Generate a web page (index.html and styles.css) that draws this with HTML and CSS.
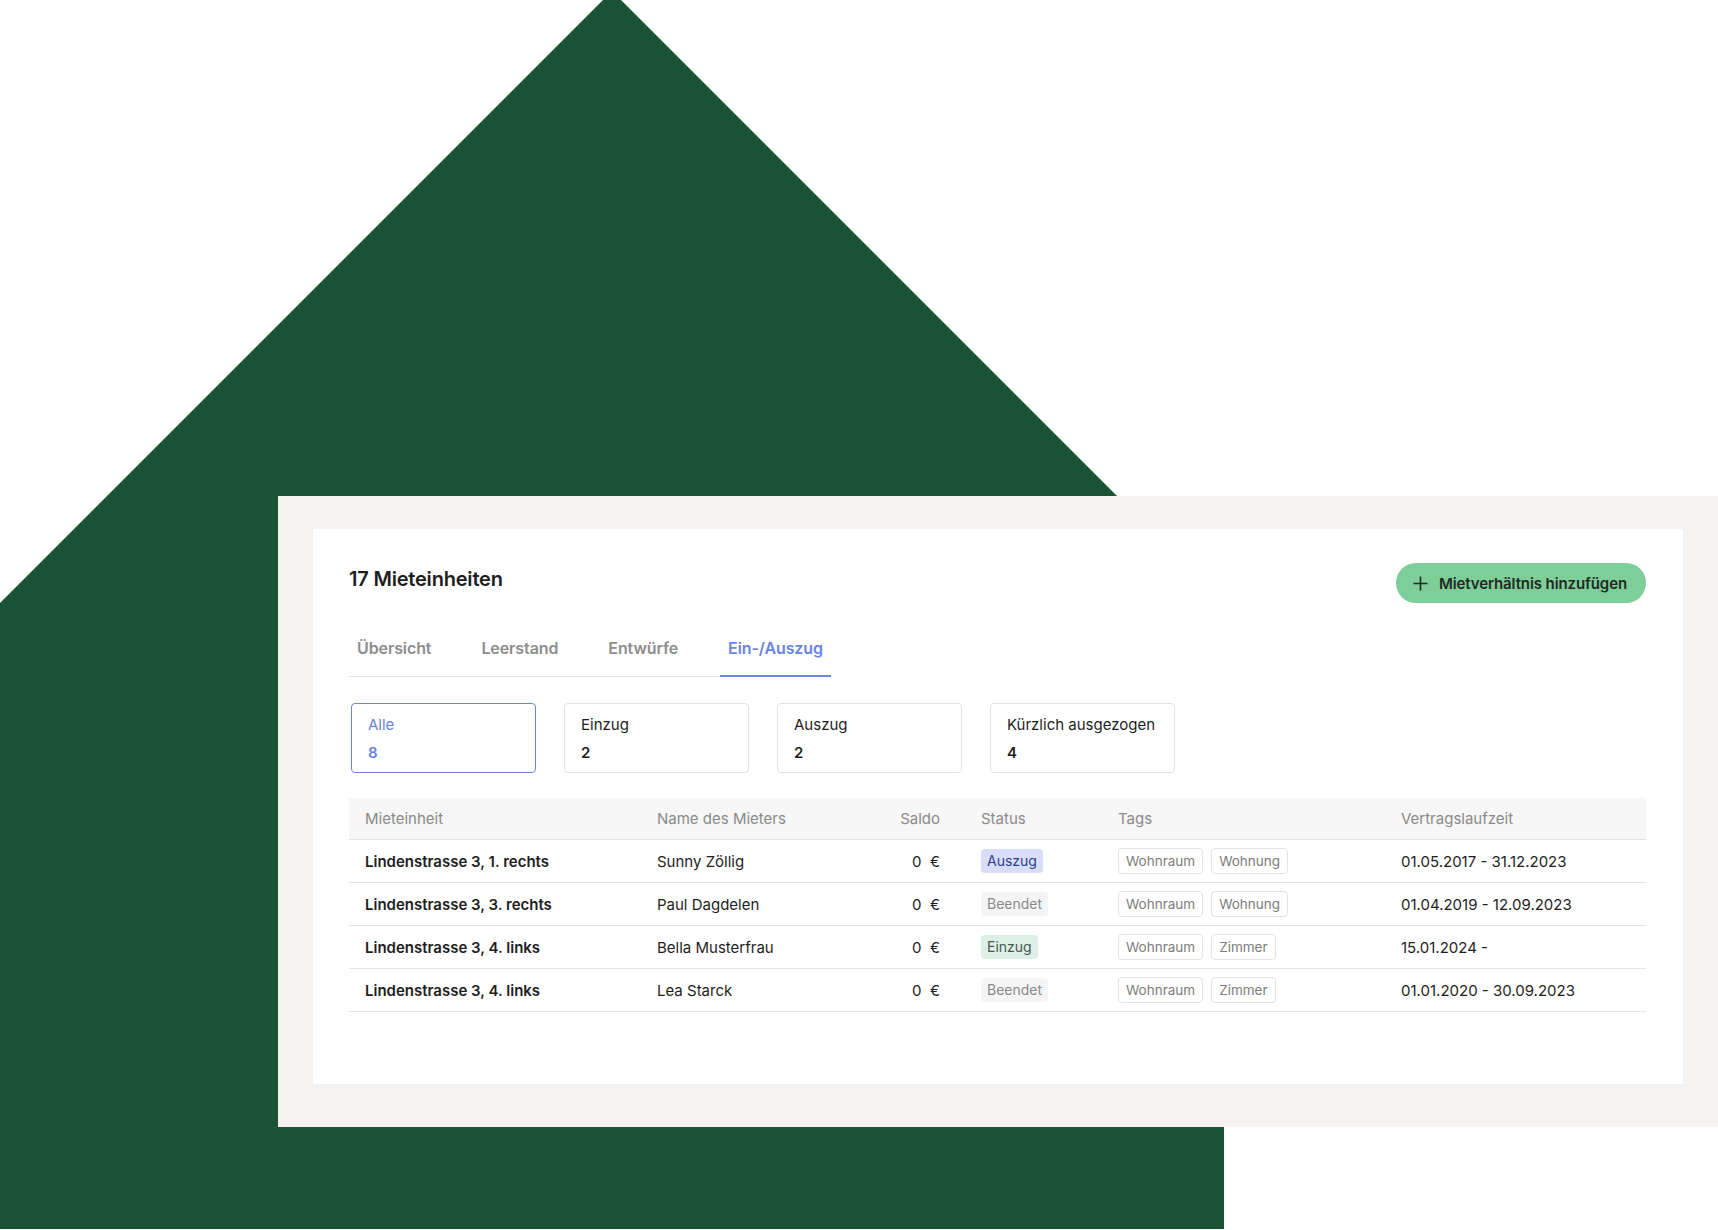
FILE: index.html
```html
<!DOCTYPE html>
<html lang="de">
<head>
  <meta charset="UTF-8" />
  <meta name="viewport" content="width=device-width, initial-scale=1.0" />
  <title>Mieteinheiten</title>
  <link rel="stylesheet" href="styles.css">
</head>
<body>
  <div class="stage">
    <svg class="house" width="1224" height="1230" viewBox="0 0 1224 1230" aria-hidden="true">
      <polygon points="612,-9 1224,603 1224,1229 0,1229 0,603" fill="#1a5434" />
    </svg>

    <div class="panel">
      <div class="card">
        <div class="card-head">
          <h1>17 Mieteinheiten</h1>
          <button type="button" class="add-btn">
            <svg width="15" height="15" viewBox="0 0 15 15"><path d="M7.5 0.5v14M0.5 7.5h14" stroke="#1f2a22" stroke-width="1.6" fill="none"/></svg>
            <span>Mietverhältnis hinzufügen</span>
          </button>
        </div>

        <nav class="tabs">
          <a class="tab">Übersicht</a>
          <a class="tab">Leerstand</a>
          <a class="tab">Entwürfe</a>
          <a class="tab active">Ein-/Auszug</a>
        </nav>

        <div class="filters">
          <div class="filter active">
            <span class="filter-label">Alle</span>
            <span class="filter-count">8</span>
          </div>
          <div class="filter">
            <span class="filter-label">Einzug</span>
            <span class="filter-count">2</span>
          </div>
          <div class="filter">
            <span class="filter-label">Auszug</span>
            <span class="filter-count">2</span>
          </div>
          <div class="filter">
            <span class="filter-label">Kürzlich ausgezogen</span>
            <span class="filter-count">4</span>
          </div>
        </div>

        <table class="units">
          <colgroup>
            <col class="c-unit"><col class="c-name"><col class="c-saldo"><col class="c-status"><col class="c-tags"><col>
          </colgroup>
          <thead>
            <tr>
              <th>Mieteinheit</th>
              <th>Name des Mieters</th>
              <th class="num">Saldo</th>
              <th>Status</th>
              <th>Tags</th>
              <th>Vertragslaufzeit</th>
            </tr>
          </thead>
          <tbody>
            <tr>
              <td class="unit">Lindenstrasse 3, 1. rechts</td>
              <td>Sunny Zöllig</td>
              <td class="num">0&nbsp; €</td>
              <td><span class="badge out">Auszug</span></td>
              <td><span class="chip">Wohnraum</span><span class="chip">Wohnung</span></td>
              <td>01.05.2017 - 31.12.2023</td>
            </tr>
            <tr>
              <td class="unit">Lindenstrasse 3, 3. rechts</td>
              <td>Paul Dagdelen</td>
              <td class="num">0&nbsp; €</td>
              <td><span class="badge done">Beendet</span></td>
              <td><span class="chip">Wohnraum</span><span class="chip">Wohnung</span></td>
              <td>01.04.2019 - 12.09.2023</td>
            </tr>
            <tr>
              <td class="unit">Lindenstrasse 3, 4. links</td>
              <td>Bella Musterfrau</td>
              <td class="num">0&nbsp; €</td>
              <td><span class="badge in">Einzug</span></td>
              <td><span class="chip">Wohnraum</span><span class="chip">Zimmer</span></td>
              <td>15.01.2024 -</td>
            </tr>
            <tr>
              <td class="unit">Lindenstrasse 3, 4. links</td>
              <td>Lea Starck</td>
              <td class="num">0&nbsp; €</td>
              <td><span class="badge done">Beendet</span></td>
              <td><span class="chip">Wohnraum</span><span class="chip">Zimmer</span></td>
              <td>01.01.2020 - 30.09.2023</td>
            </tr>
          </tbody>
        </table>
      </div>
    </div>
  </div>
</body>
</html>
```

FILE: styles.css
```css
body {
  margin: 0;
  font-family: Inter, "Liberation Sans", sans-serif;
  color: #1e1e1e;
  background: #fff;
}
.stage {
  position: relative;
  width: 1718px;
  height: 1230px;
  overflow: hidden;
  padding-top: 496px;
  box-sizing: border-box;
}
.house {
  position: absolute;
  left: 0;
  top: 0;
}
.panel {
  position: relative;
  margin-left: 278px;
  background: #f4f3f1;
  padding: 33px 35px 43px 35px;
}
.card {
  background: #fff;
  height: 555px;
  box-sizing: border-box;
  padding: 34px 37px 0 36px;
}
.card-head {
  display: flex;
  align-items: center;
  justify-content: space-between;
}
.card-head h1 {
  margin: 0;
  font-size: 20px;
  font-weight: 600;
  letter-spacing: -0.2px;
  padding-bottom: 8px;
}
.add-btn {
  display: flex;
  align-items: center;
  gap: 11px;
  height: 40px;
  padding: 0 19px 0 17px;
  border: none;
  border-radius: 20px;
  background: #7dce98;
  color: #1f2a22;
  font-family: inherit;
  font-size: 15px;
  font-weight: 600;
  letter-spacing: -0.1px;
  white-space: nowrap;
  cursor: pointer;
}
.tabs {
  display: inline-flex;
  gap: 34px;
  margin-top: 33px;
  border-bottom: 1px solid #e4e4e4;
}
.tab {
  padding: 0 8px 15px;
  margin-bottom: -1px;
  border-bottom: 2px solid transparent;
  font-size: 16px;
  line-height: 24px;
  font-weight: 600;
  letter-spacing: -0.1px;
  color: #8d8d8d;
}
.tab.active {
  color: #6a84e0;
  border-bottom-color: #6a84e0;
}
.filters {
  display: flex;
  gap: 28px;
  margin-top: 26px;
  padding-left: 2px;
}
.filter {
  width: 185px;
  height: 70px;
  box-sizing: border-box;
  border: 1px solid #e3e3e3;
  border-radius: 4px;
  padding: 10px 16px 8px;
  display: flex;
  flex-direction: column;
  gap: 6px;
  font-size: 15px;
  line-height: 22px;
}
.filter-count {
  font-weight: 600;
}
.filter.active {
  border-color: #6a84e0;
  color: #6a84e0;
}
.units {
  width: 100%;
  margin-top: 25px;
  border-collapse: collapse;
  table-layout: fixed;
  font-size: 15px;
}
.c-unit { width: 292px; }
.c-name { width: 229px; }
.c-saldo { width: 95px; }
.c-status { width: 137px; }
.c-tags { width: 283px; }
.units th {
  height: 41px;
  padding: 0 16px;
  background: #f7f7f7;
  text-align: left;
  font-weight: 400;
  color: #8a8a8a;
  border-bottom: 1px solid #e4e4e4;
}
.units td {
  height: 42px;
  padding: 0 16px;
  border-bottom: 1px solid #e4e4e4;
  white-space: nowrap;
}
.units .num {
  text-align: right;
  padding-right: 25px;
}
.units td.unit {
  font-weight: 600;
}
.badge {
  display: inline-block;
  height: 24px;
  line-height: 24px;
  padding: 0 6px;
  border-radius: 4px;
  font-size: 14px;
}
.badge.out {
  background: #d8defa;
  color: #2e3d8f;
}
.badge.done {
  background: #f5f5f5;
  color: #8a8a8a;
}
.badge.in {
  background: #deefe8;
  color: #475a52;
}
.chip {
  display: inline-block;
  height: 24px;
  line-height: 24px;
  padding: 0 7px;
  margin-right: 8px;
  border: 1px solid #e3e3e3;
  border-radius: 4px;
  font-size: 13.5px;
  color: #7d7d7d;
}
```
